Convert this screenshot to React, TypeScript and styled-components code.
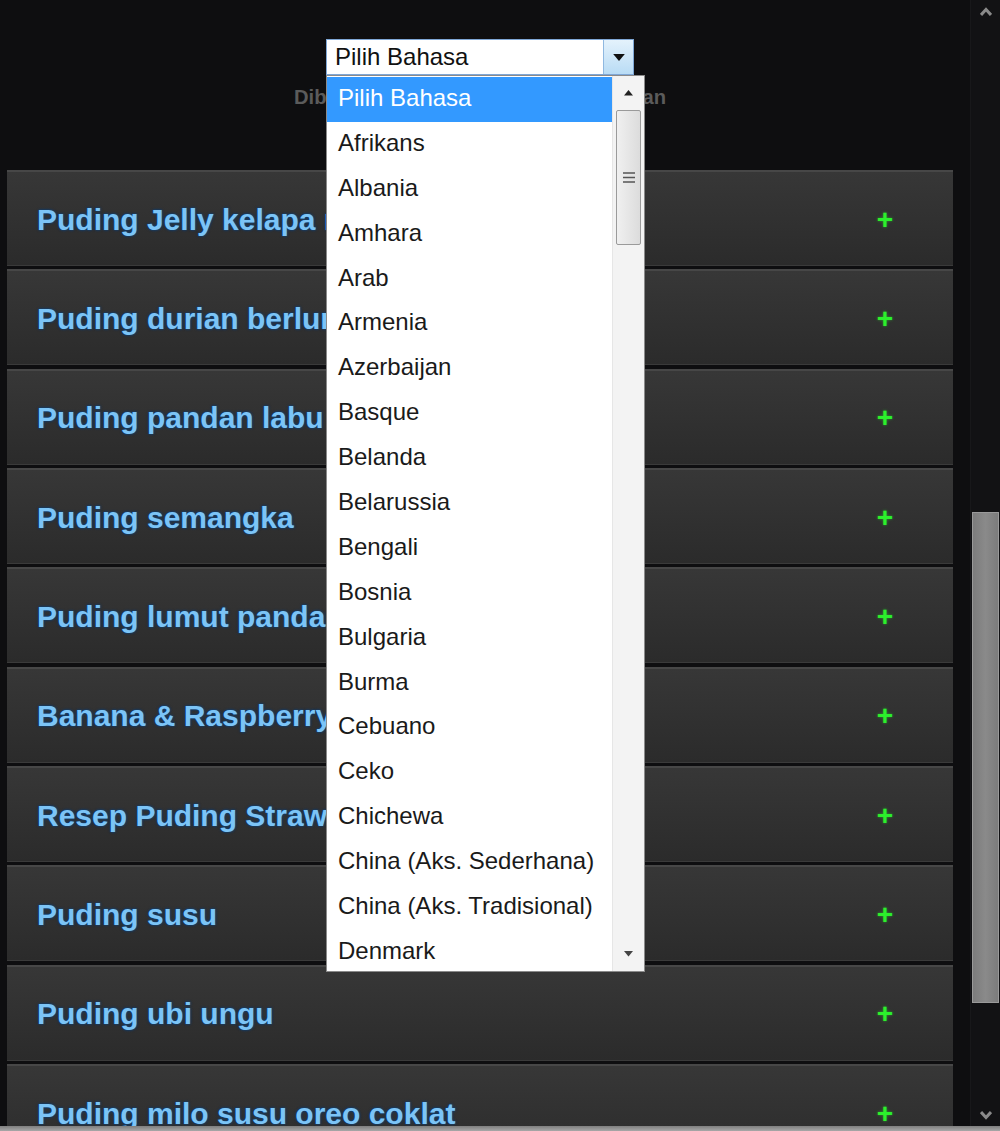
import React from 'react';
import styled, { createGlobalStyle } from 'styled-components';

const GlobalStyle = createGlobalStyle`
  html, body {
    margin: 0;
    padding: 0;
    background: #0e0e10;
  }
  body {
    font-family: 'Liberation Sans', Arial, sans-serif;
  }
`;

const Page = styled.div`
  width: 1000px;
  height: 1131px;
  display: flex;
  flex-direction: column;
  overflow: hidden;
  background: #0e0e10;
`;

const Body = styled.div`
  flex: 1;
  display: flex;
  min-height: 0;
`;

const Main = styled.div`
  width: 970px;
  padding: 0 17px 0 7px;
  box-sizing: border-box;
  overflow: hidden;
`;

const Header = styled.div`
  height: 170px;
  display: flex;
  flex-direction: column;
  align-items: center;
  padding-top: 39px;
  box-sizing: border-box;
`;

const SelectWrap = styled.div`
  position: relative;
  width: 308px;
  z-index: 5;
`;

const SelectBox = styled.div`
  height: 36px;
  box-sizing: border-box;
  display: flex;
  align-items: center;
  background: #fff;
  border: 1px solid #7fa7d6;
`;

const SelectText = styled.span`
  flex: 1;
  padding-left: 8px;
  font-size: 24px;
  color: #111;
`;

const SelectButton = styled.div`
  width: 29px;
  align-self: stretch;
  display: flex;
  align-items: center;
  justify-content: center;
  background: linear-gradient(#e4f2fc, #b9dcf5);
  border-left: 1px solid #8fb8e0;
`;

const Listbox = styled.div`
  position: absolute;
  top: 100%;
  left: 0;
  width: 319px;
  height: 897px;
  box-sizing: border-box;
  display: flex;
  background: #fff;
  border: 1px solid #8a8a8a;
  overflow: hidden;
`;

const Options = styled.div`
  flex: 1;
  padding-top: 1px;
  overflow: hidden;
`;

const Option = styled.div<{ $active?: boolean }>`
  height: 44.9px;
  line-height: 42px;
  padding-left: 11px;
  font-size: 24px;
  white-space: nowrap;
  color: ${(p) => (p.$active ? '#fff' : '#1a1a1a')};
  background: ${(p) => (p.$active ? '#3399ff' : 'transparent')};
`;

const ListScroll = styled.div`
  width: 31px;
  display: flex;
  flex-direction: column;
  align-items: center;
  background: #f3f3f3;
  border-left: 1px solid #e6e6e6;
`;

const ArrowCell = styled.div`
  height: 34px;
  display: flex;
  align-items: center;
  justify-content: center;
`;

const ListThumb = styled.div`
  width: 25px;
  height: 135px;
  box-sizing: border-box;
  display: flex;
  align-items: center;
  justify-content: center;
  border: 1px solid #9a9a9a;
  border-radius: 2px;
  background: linear-gradient(90deg, #f0f0f0, #dcdcdc);
`;

const Spacer = styled.div`
  flex: 1;
`;

const PoweredBy = styled.div`
  margin-top: 11px;
  font-size: 20.2px;
  font-weight: bold;
  color: #5b5b5b;
  white-space: nowrap;
`;

const RowList = styled.div`
  display: flex;
  flex-direction: column;
  gap: 3.35px;
`;

const Row = styled.div`
  height: 96px;
  flex-shrink: 0;
  box-sizing: border-box;
  display: flex;
  align-items: center;
  padding: 2px 56px 0 30px;
  background: linear-gradient(#373737, #2b2b2b);
  border-top: 2px solid #474747;
  border-bottom: 1px solid #3a3a3a;
`;

const Title = styled.span`
  flex: 1;
  font-size: 30px;
  font-weight: bold;
  color: #7cc4f6;
  white-space: nowrap;
  text-shadow: 0 0 2px #0b3f78, 0 0 3px #0b3f78;
`;

const Plus = styled.span`
  width: 24px;
  text-align: center;
  font-size: 28px;
  font-weight: bold;
  color: #2cf02c;
  text-shadow: 0 0 3px rgba(40, 255, 40, 0.5);
`;

const PageScroll = styled.div`
  width: 30px;
  display: flex;
  flex-direction: column;
  align-items: center;
  background: #121214;
  border-left: 1px solid #18181a;
  box-sizing: border-box;
`;

const PageArrow = styled.div`
  height: 22px;
  display: flex;
  align-items: center;
  justify-content: center;
`;

const PageThumb = styled.div`
  width: 27px;
  height: 491px;
  margin-top: 490px;
  box-sizing: border-box;
  background: linear-gradient(90deg, #7c7c7c, #8a8a8a, #7c7c7c);
  border: 1px solid #9a9a9a;
`;

const BottomEdge = styled.div`
  height: 5px;
  background: linear-gradient(#7e7e7e, #a8a8a8);
`;

const languages = [
  'Pilih Bahasa',
  'Afrikans',
  'Albania',
  'Amhara',
  'Arab',
  'Armenia',
  'Azerbaijan',
  'Basque',
  'Belanda',
  'Belarussia',
  'Bengali',
  'Bosnia',
  'Bulgaria',
  'Burma',
  'Cebuano',
  'Ceko',
  'Chichewa',
  'China (Aks. Sederhana)',
  'China (Aks. Tradisional)',
  'Denmark',
];

const recipes = [
  'Puding Jelly kelapa muda',
  'Puding durian berlumut',
  'Puding pandan labu kuning',
  'Puding semangka',
  'Puding lumut pandan',
  'Banana & Raspberry Pudding',
  'Resep Puding Strawberry',
  'Puding susu',
  'Puding ubi ungu',
  'Puding milo susu oreo coklat',
];

const Triangle: React.FC<{ up?: boolean; color?: string; size?: number }> = ({ up, color = '#111', size = 10 }) => (
  <svg width={size} height={size / 2 + 1} viewBox='0 0 10 6'>
    <path d={up ? 'M0 6 L5 0 L10 6 Z' : 'M0 0 L10 0 L5 6 Z'} fill={color} />
  </svg>
);

const Chevron: React.FC<{ up?: boolean }> = ({ up }) => (
  <svg width='12' height='9' viewBox='0 0 12 9'>
    <path
      d={up ? 'M1 8 L6 2.5 L11 8' : 'M1 1 L6 6.5 L11 1'}
      fill='none'
      stroke='#8a8a8a'
      strokeWidth='3'
    />
  </svg>
);

const Grip = () => (
  <svg width='12' height='11' viewBox='0 0 12 11'>
    <path d='M0 1 H12 M0 5.5 H12 M0 10 H12' stroke='#555' strokeWidth='1.5' />
  </svg>
);

const App: React.FC = () => {
  return (
    <Page>
      <GlobalStyle />
      <Body>
        <Main>
          <Header>
            <SelectWrap>
              <SelectBox>
                <SelectText>Pilih Bahasa</SelectText>
                <SelectButton>
                  <Triangle size={12} />
                </SelectButton>
              </SelectBox>
              <Listbox>
                <Options>
                  {languages.map((lang, i) => (
                    <Option key={lang} $active={i === 0}>
                      {lang}
                    </Option>
                  ))}
                </Options>
                <ListScroll>
                  <ArrowCell>
                    <Triangle up size={9} color='#222' />
                  </ArrowCell>
                  <ListThumb>
                    <Grip />
                  </ListThumb>
                  <Spacer />
                  <ArrowCell>
                    <Triangle size={9} color='#444' />
                  </ArrowCell>
                </ListScroll>
              </Listbox>
            </SelectWrap>
            <PoweredBy>Diberdayakan oleh Google Terjemahan</PoweredBy>
          </Header>
          <RowList>
            {recipes.map((title) => (
              <Row key={title}>
                <Title>{title}</Title>
                <Plus>+</Plus>
              </Row>
            ))}
          </RowList>
        </Main>
        <PageScroll>
          <PageArrow>
            <Chevron up />
          </PageArrow>
          <PageThumb />
          <Spacer />
          <PageArrow>
            <Chevron />
          </PageArrow>
        </PageScroll>
      </Body>
      <BottomEdge />
    </Page>
  );
};

export default App;
